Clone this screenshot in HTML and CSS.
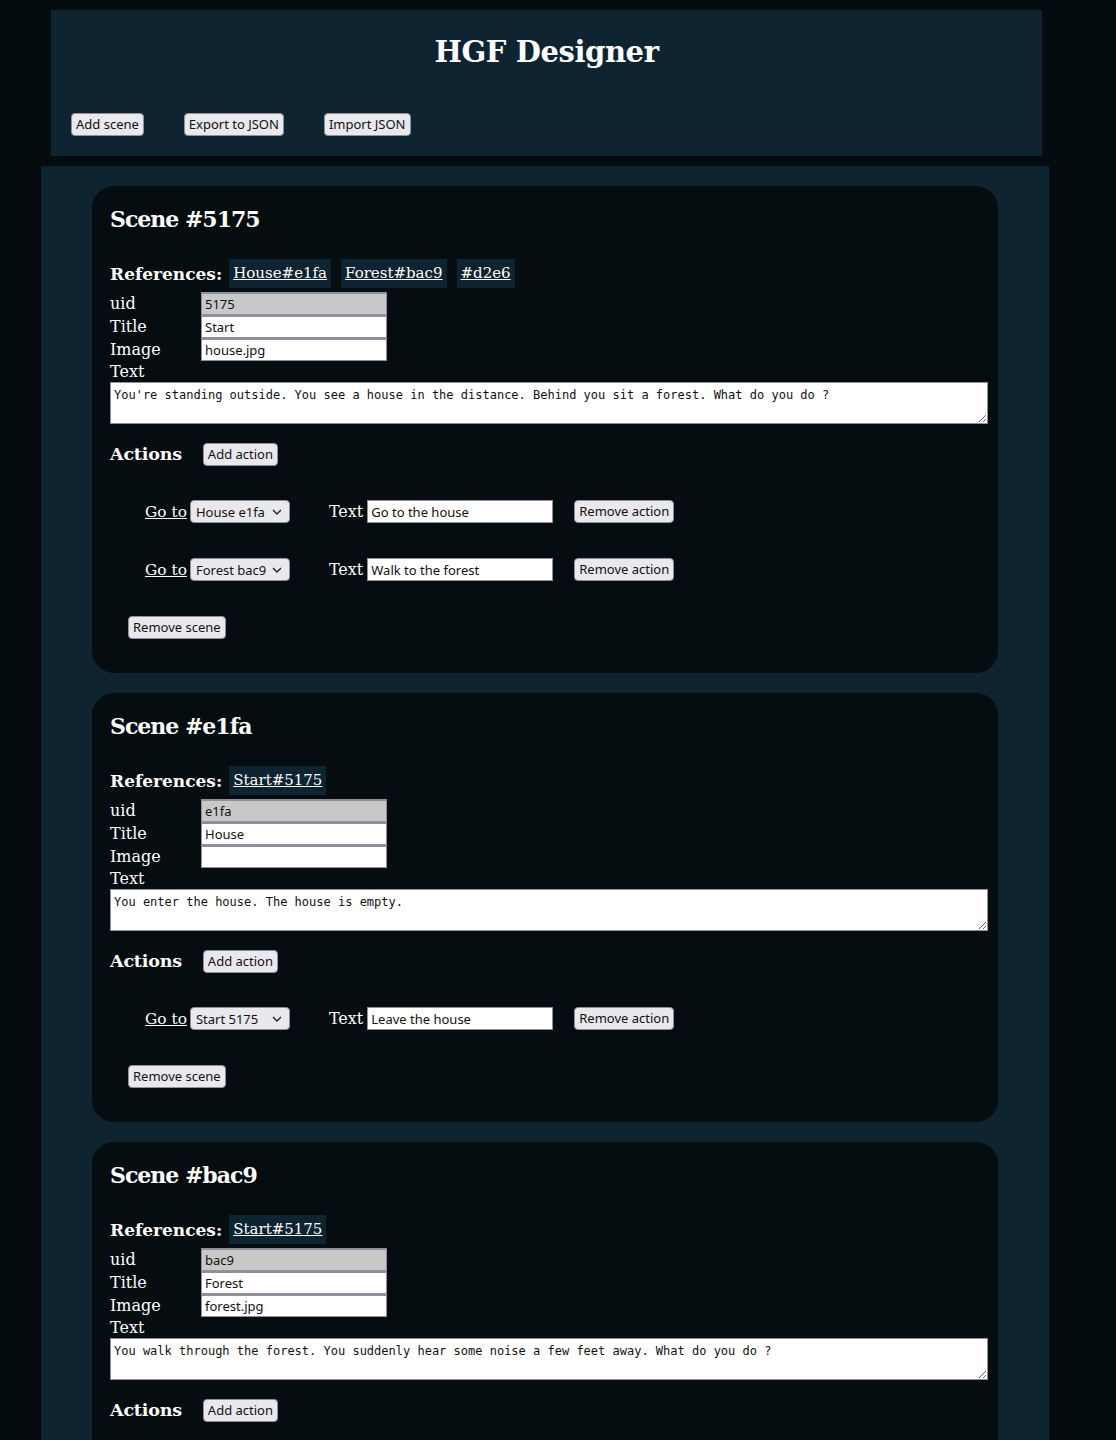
FILE: index.html
```html
<!DOCTYPE html>
<html>
<head>
<meta charset="utf-8">
<title>HGF Designer</title>
<link rel="stylesheet" href="styles.css">
</head>
<body>
<header class="top">
  <h1 class="app-title">HGF Designer</h1>
  <div class="toolbar">
    <button class="btn">Add scene</button>
    <button class="btn">Export to JSON</button>
    <button class="btn">Import JSON</button>
  </div>
</header>
<main class="scenes">
  <section class="card">
    <h2 class="scene-title">Scene #5175</h2>
    <div class="refs"><span class="refs-label">References:</span><a class="chip" href="#">House#e1fa</a><a class="chip" href="#">Forest#bac9</a><a class="chip" href="#">#d2e6</a></div>
    <div class="fields">
      <label class="lbl">uid</label><input class="field ro" value="5175" readonly>
      <label class="lbl">Title</label><input class="field" value="Start">
      <label class="lbl">Image</label><input class="field" value="house.jpg">
    </div>
    <div class="lbl text-lbl">Text</div>
    <textarea class="story">You're standing outside. You see a house in the distance. Behind you sit a forest. What do you do ?</textarea>
    <div class="actions-head"><h3 class="actions-title">Actions</h3><button class="btn">Add action</button></div>
    <div class="action-list">
      <div class="action">
        <a class="goto" href="#">Go to</a>
        <span class="sel-wrap"><select class="sel"><option>House e1fa</option></select><svg class="chev" width="10" height="6" viewBox="0 0 10 6"><path d="M1 1l4 4 4-4" fill="none" stroke="#222" stroke-width="1.4"/></svg></span>
        <span class="lbl act-lbl">Text</span><input class="field act-field" value="Go to the house">
        <button class="btn rm-act">Remove action</button>
      </div>
      <div class="action">
        <a class="goto" href="#">Go to</a>
        <span class="sel-wrap"><select class="sel"><option>Forest bac9</option></select><svg class="chev" width="10" height="6" viewBox="0 0 10 6"><path d="M1 1l4 4 4-4" fill="none" stroke="#222" stroke-width="1.4"/></svg></span>
        <span class="lbl act-lbl">Text</span><input class="field act-field" value="Walk to the forest">
        <button class="btn rm-act">Remove action</button>
      </div>
    </div>
    <button class="btn rm-scene">Remove scene</button>
  </section>

  <section class="card">
    <h2 class="scene-title">Scene #e1fa</h2>
    <div class="refs"><span class="refs-label">References:</span><a class="chip" href="#">Start#5175</a></div>
    <div class="fields">
      <label class="lbl">uid</label><input class="field ro" value="e1fa" readonly>
      <label class="lbl">Title</label><input class="field" value="House">
      <label class="lbl">Image</label><input class="field" value="">
    </div>
    <div class="lbl text-lbl">Text</div>
    <textarea class="story">You enter the house. The house is empty.</textarea>
    <div class="actions-head"><h3 class="actions-title">Actions</h3><button class="btn">Add action</button></div>
    <div class="action-list">
      <div class="action">
        <a class="goto" href="#">Go to</a>
        <span class="sel-wrap"><select class="sel"><option>Start 5175</option></select><svg class="chev" width="10" height="6" viewBox="0 0 10 6"><path d="M1 1l4 4 4-4" fill="none" stroke="#222" stroke-width="1.4"/></svg></span>
        <span class="lbl act-lbl">Text</span><input class="field act-field" value="Leave the house">
        <button class="btn rm-act">Remove action</button>
      </div>
    </div>
    <button class="btn rm-scene">Remove scene</button>
  </section>

  <section class="card">
    <h2 class="scene-title">Scene #bac9</h2>
    <div class="refs"><span class="refs-label">References:</span><a class="chip" href="#">Start#5175</a></div>
    <div class="fields">
      <label class="lbl">uid</label><input class="field ro" value="bac9" readonly>
      <label class="lbl">Title</label><input class="field" value="Forest">
      <label class="lbl">Image</label><input class="field" value="forest.jpg">
    </div>
    <div class="lbl text-lbl">Text</div>
    <textarea class="story">You walk through the forest. You suddenly hear some noise a few feet away. What do you do ?</textarea>
    <div class="actions-head"><h3 class="actions-title">Actions</h3><button class="btn">Add action</button></div>
    <div class="action-list">
      <div class="action">
        <a class="goto" href="#">Go to</a>
        <span class="sel-wrap"><select class="sel"><option>Start 5175</option></select><svg class="chev" width="10" height="6" viewBox="0 0 10 6"><path d="M1 1l4 4 4-4" fill="none" stroke="#222" stroke-width="1.4"/></svg></span>
        <span class="lbl act-lbl">Text</span><input class="field act-field" value="Go back">
        <button class="btn rm-act">Remove action</button>
      </div>
    </div>
    <button class="btn rm-scene">Remove scene</button>
  </section>
</main>
</body>
</html>
```
FILE: styles.css
```css
* { box-sizing: border-box; }
html, body { margin: 0; padding: 0; }
body {
  background: #050c10;
  color: #fff;
  font-family: "DejaVu Serif", "Liberation Serif", serif;
  padding: 10px 0 0 41px;
}
.top {
  width: 991px;
  height: 146px;
  margin-left: 10px;
  background: #0e2431;
  padding: 21px 20px 0 20px;
}
.app-title {
  margin: 0;
  height: 40px;
  line-height: 42px;
  text-align: center;
  font-size: 29px;
  font-weight: bold;
  letter-spacing: -0.4px;
}
.toolbar {
  margin-top: 42px;
  display: flex;
  gap: 40px;
}
.btn {
  font-family: "Noto Sans", "Open Sans", sans-serif;
  font-size: 13px;
  height: 23px;
  line-height: 19px;
  padding: 0 4px;
  background: #e9e9ed;
  color: #111;
  border: 1px solid #8f8f9d;
  border-radius: 4px;
}
.scenes {
  width: 1008px;
  min-height: 1300px;
  margin-top: 10px;
  background: #0e2431;
  padding: 20px 0 1px 51px;
}
.card {
  width: 906px;
  background: #050d11;
  border-radius: 22px;
  padding: 16px 10px 34px 18px;
  margin-bottom: 20px;
}
.scene-title {
  margin: 0;
  height: 34px;
  line-height: 34px;
  font-size: 22px;
  font-weight: bold;
  letter-spacing: -1px;
}
.refs {
  margin-top: 23px;
  height: 29px;
  display: flex;
  align-items: center;
}
.refs-label {
  font-weight: bold;
  font-size: 17px;
  margin-right: 7px;
}
.chip {
  height: 29px;
  line-height: 29px;
  padding: 0 4px;
  margin-right: 10px;
  background: #0e2431;
  color: #fff;
  font-size: 15px;
  text-decoration: underline;
}
.fields {
  margin-top: 4px;
  display: grid;
  grid-template-columns: 91px 186px;
  grid-auto-rows: 23px;
}
.lbl {
  font-size: 16px;
  line-height: 23px;
  color: #fff;
}
.field {
  font-family: "Noto Sans", "Open Sans", sans-serif;
  font-size: 13px;
  height: 23px;
  width: 186px;
  padding: 0 3px;
  background: #fff;
  color: #111;
  border: 1px solid #8f8f9d;
  border-top-width: 2px;
  outline: none;
}
.field.ro { background: #c8c8c8; }
.text-lbl {
  height: 21px;
  line-height: 21px;
}
.story {
  display: block;
  width: 878px;
  height: 42px;
  margin: 0;
  padding: 5px 3px 2px 3px;
  font-family: "DejaVu Sans Mono", "Liberation Mono", monospace;
  font-size: 12px;
  color: #111;
  background: #fff;
  border: 1px solid #8f8f9d;
}
.actions-head {
  margin-top: 19px;
  height: 23px;
  display: flex;
  align-items: center;
}
.actions-title {
  margin: 0 21px 0 0;
  font-size: 17.5px;
  font-weight: bold;
  line-height: 23px;
  letter-spacing: -0.2px;
}
.action-list {
  padding-top: 34px;
  padding-left: 35px;
  display: flex;
  flex-direction: column;
  gap: 35px;
}
.action {
  height: 23px;
  display: flex;
  align-items: center;
}
.goto {
  color: #fff;
  font-size: 15.4px;
  text-decoration: underline;
  margin-right: 3px;
}
.sel-wrap {
  position: relative;
  display: inline-block;
  height: 23px;
  margin-right: 39px;
}
.sel {
  appearance: none;
  -webkit-appearance: none;
  width: 100px;
  height: 23px;
  padding: 0 18px 0 5px;
  font-family: "Noto Sans", "Open Sans", sans-serif;
  font-size: 13px;
  color: #111;
  background: #e9e9ed;
  border: 1px solid #8f8f9d;
  border-radius: 4px;
}
.chev {
  position: absolute;
  right: 8px;
  top: 9px;
  pointer-events: none;
}
.act-lbl { margin-right: 4px; }
.act-field { border-top-width: 1px; }
.rm-act { margin-left: 21px; }
.rm-scene {
  display: block;
  margin-top: 35px;
  margin-left: 18px;
}
```
